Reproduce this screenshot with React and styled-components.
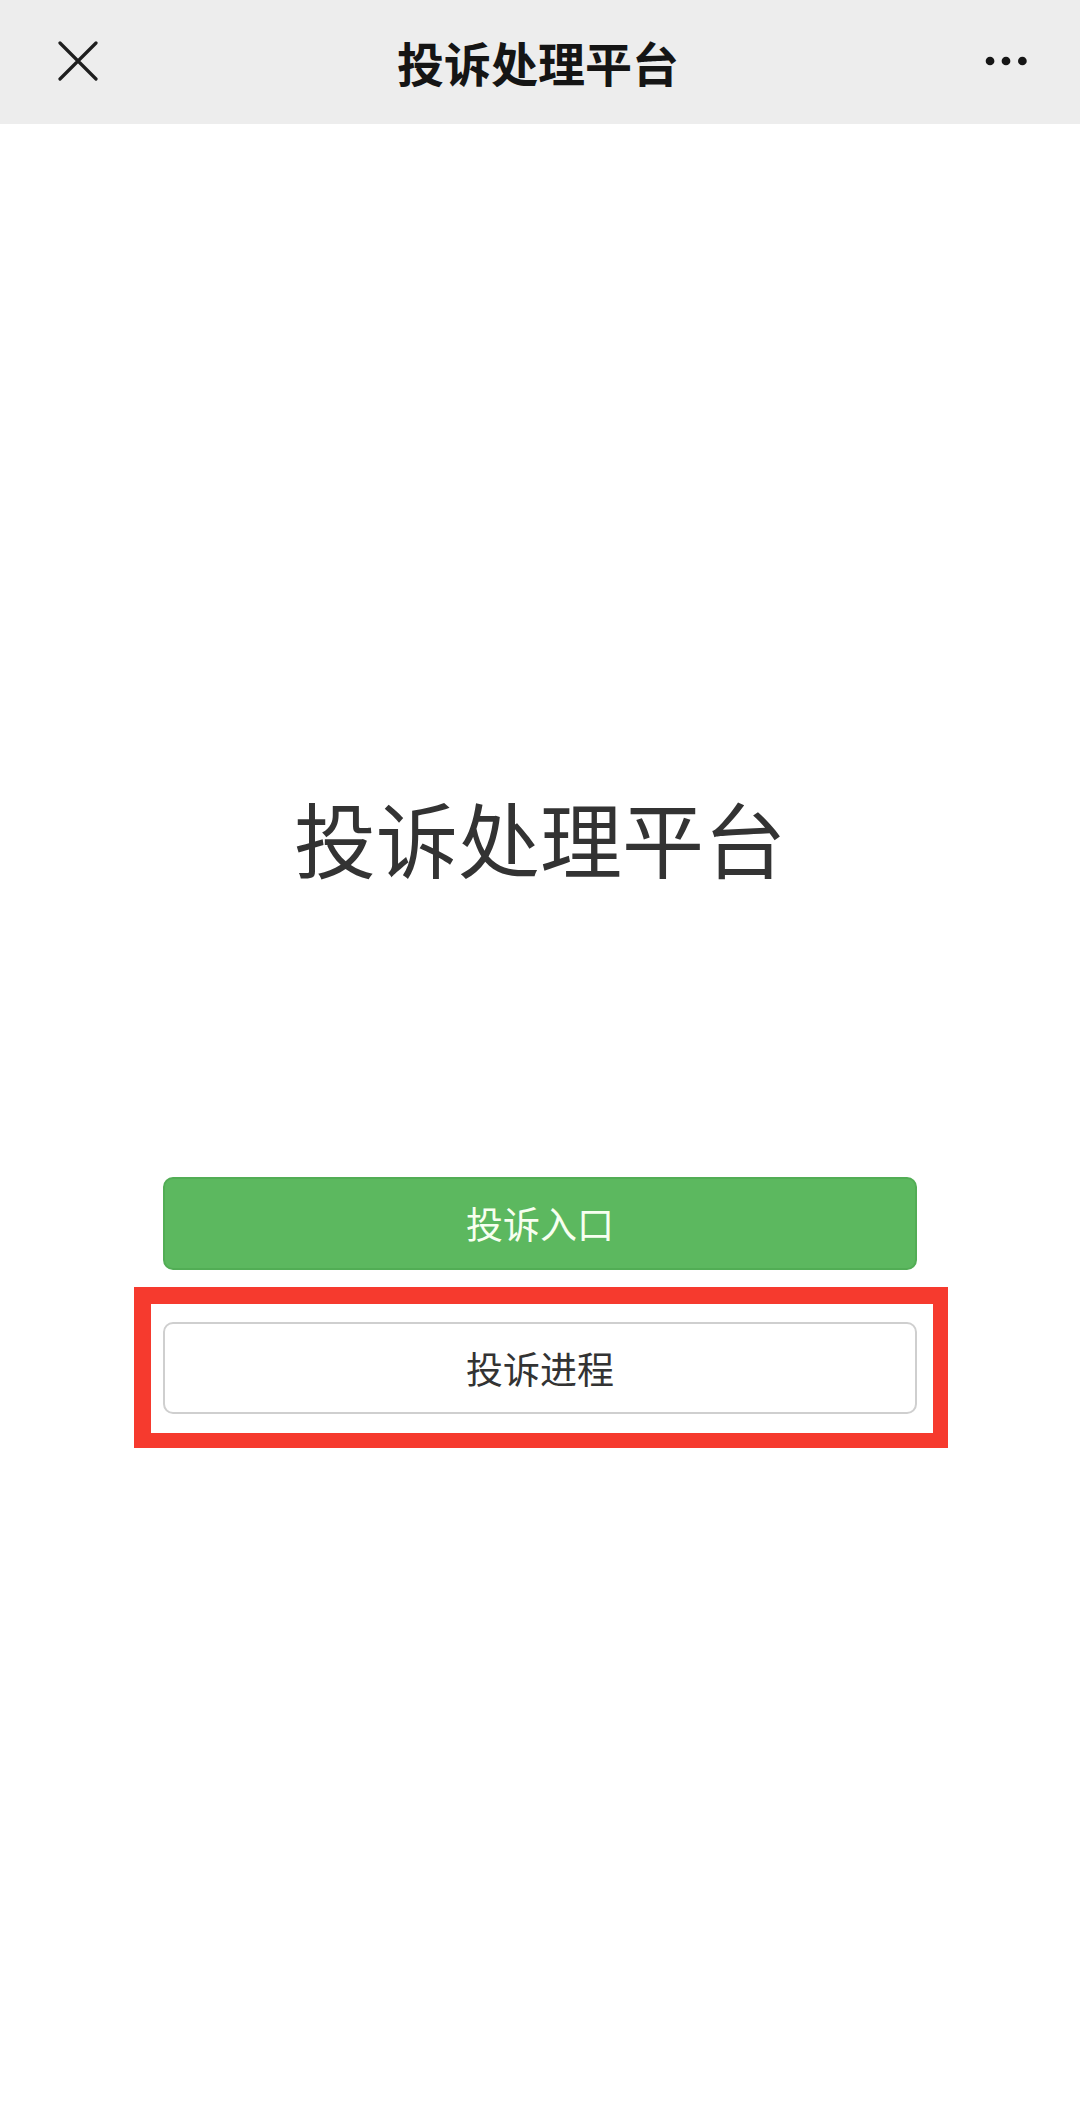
import React from "react";
import styled, { createGlobalStyle } from "styled-components";

const Global = createGlobalStyle`
  html, body { margin: 0; padding: 0; background: #ffffff; }
  body { font-family: "PingFang SC", "Noto Sans CJK SC", "Noto Sans", sans-serif; }
  * { box-sizing: border-box; }
`;

const Page = styled.div`
  width: 1080px;
  min-height: 2106px;
  background: #ffffff;
  display: flex;
  flex-direction: column;
`;

const Header = styled.header`
  height: 124px;
  background: #ededed;
  display: grid;
  grid-template-columns: 1fr auto 1fr;
  align-items: center;
  padding: 0 53px 0 58px;
`;

const IconButton = styled.button`
  border: 0;
  background: transparent;
  padding: 0;
  width: 42px;
  height: 42px;
  display: flex;
  align-items: center;
  justify-content: ${(p) => (p.$end ? "flex-end" : "flex-start")};
  justify-self: ${(p) => (p.$end ? "end" : "start")};
  margin-top: -2px;
`;

const HeaderTitle = styled.h1`
  margin: -2px 9px 0 0;
  font-size: 47px;
  font-weight: 700;
  color: #151515;
  line-height: 1;
  letter-spacing: 0;
`;

const Main = styled.main`
  display: flex;
  flex-direction: column;
  align-items: center;
`;

const Title = styled.h2`
  margin: 663px 0 0;
  font-size: 82px;
  line-height: 100px;
  font-weight: 400;
  color: #333333;
`;

const Actions = styled.div`
  width: 754px;
  margin-top: 290px;
  display: flex;
  flex-direction: column;
`;

const Button = styled.button`
  width: 100%;
  height: ${(p) => (p.$primary ? "93px" : "92px")};
  border-radius: 10px;
  font-family: inherit;
  font-size: 37px;
  line-height: 1;
  display: flex;
  align-items: center;
  justify-content: center;
  cursor: pointer;
  background: ${(p) => (p.$primary ? "#5cb85f" : "#ffffff")};
  color: ${(p) => (p.$primary ? "#f7fff0" : "#333333")};
  border: 2px solid ${(p) => (p.$primary ? "#52ad55" : "#cfcfcf")};
`;

const Highlight = styled.div`
  margin: 17px -31px 0 -29px;
  border-style: solid;
  border-color: #f63a2e;
  border-width: 17px 15px 15px 17px;
  padding: 18px 16px 19px 12px;
`;

const CloseIcon = () => (
  <svg width="40" height="40" viewBox="0 0 40 40">
    <path
      d="M2 2 L38 38 M38 2 L2 38"
      stroke="#1e1e1e"
      strokeWidth="3.2"
      strokeLinecap="round"
      fill="none"
    />
  </svg>
);

const MoreIcon = () => (
  <svg width="50" height="12" viewBox="0 0 50 12">
    <circle cx="6" cy="6" r="5.2" fill="#161616" />
    <circle cx="25" cy="6" r="5.2" fill="#161616" />
    <circle cx="44.5" cy="6" r="5.2" fill="#161616" />
  </svg>
);

export default function App() {
  return (
    <>
      <Global />
      <Page>
        <Header>
          <IconButton aria-label="关闭">
            <CloseIcon />
          </IconButton>
          <HeaderTitle>投诉处理平台</HeaderTitle>
          <IconButton $end aria-label="更多">
            <MoreIcon />
          </IconButton>
        </Header>
        <Main>
          <Title>投诉处理平台</Title>
          <Actions>
            <Button $primary>投诉入口</Button>
            <Highlight>
              <Button>投诉进程</Button>
            </Highlight>
          </Actions>
        </Main>
      </Page>
    </>
  );
}
